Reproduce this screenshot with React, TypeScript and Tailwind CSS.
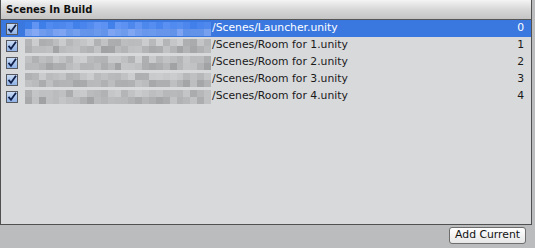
import React from 'react';

const scenes = [
  { path: '/Scenes/Launcher.unity', index: 0 },
  { path: '/Scenes/Room for 1.unity', index: 1 },
  { path: '/Scenes/Room for 2.unity', index: 2 },
  { path: '/Scenes/Room for 3.unity', index: 3 },
  { path: '/Scenes/Room for 4.unity', index: 4 },
];

// cheap deterministic noise for the pixelated (redacted) part of each path
function noise(seed: number) {
  const x = Math.sin(seed * 12.9898) * 43758.5453;
  return x - Math.floor(x);
}

function Mosaic({ row, selected }: { row: number; selected: boolean }) {
  const cols = 27;
  return (
    <div className="flex flex-col w-[186px] h-[14px]">
      {[0, 1].map((band) => (
        <div key={band} className="flex flex-1">
          {Array.from({ length: cols }).map((_, i) => {
            const n = noise(row * 100 + band * 40 + i);
            const bg = selected
              ? `rgb(${Math.round(60 + n * 40 + band * 35)}, ${Math.round(125 + n * 25 + band * 20)}, ${Math.round(232 + n * 12)})`
              : `rgb(${Math.round(170 + n * 36 - band * 10)}, ${Math.round(171 + n * 36 - band * 10)}, ${Math.round(173 + n * 36 - band * 10)})`;
            return <div key={i} className="flex-1" style={{ backgroundColor: bg }} />;
          })}
        </div>
      ))}
    </div>
  );
}

function Check() {
  return (
    <div className="w-[12px] h-[12px] border border-[#55585e] bg-gradient-to-b from-[#c9dcf5] to-[#8fb2e6] flex items-center justify-center">
      <svg width="10" height="10" viewBox="0 0 10 10">
        <path d="M1.5 4.8 L4 7.8 L9 0.8" fill="none" stroke="#0f1f4a" strokeWidth="1.8" />
      </svg>
    </div>
  );
}

export default function App() {
  return (
    <div className="w-[535px] h-[248px] bg-[#bbbcbd] flex flex-col font-['DejaVu_Sans',sans-serif] text-[10.8px] text-black">
      <div className="w-[532px] h-[225px] bg-[#d8d9db] border-l border-r border-b border-[#505050] flex flex-col">
        <div className="h-[20px] border-b border-[#555] bg-gradient-to-b from-[#f4f4f4] via-[#d7d7d7] to-[#c4c4c4] flex items-center pl-[5px] font-bold text-[10px] text-[#111]">
          Scenes In Build
        </div>
        <div className="flex flex-col">
          {scenes.map((s, r) => {
            const selected = r === 0;
            return (
              <div
                key={s.index}
                className={`h-[17px] flex items-center pl-[5px] pr-[7px] ${selected ? 'bg-[#3a78e0] text-white' : 'text-[#1a1a1a]'}`}
              >
                <Check />
                <div className="ml-[7px]">
                  <Mosaic row={r} selected={selected} />
                </div>
                <span className="ml-[1px]">{s.path}</span>
                <span className="ml-auto">{s.index}</span>
              </div>
            );
          })}
        </div>
      </div>
      <div className="flex justify-end pr-[9px] pt-[2px]">
        <button className="h-[17px] px-[5px] rounded-[3px] border border-[#6e6e6e] bg-gradient-to-b from-white to-[#e6e6e6] text-[10.8px] leading-none text-[#111]">
          Add Current
        </button>
      </div>
    </div>
  );
}
